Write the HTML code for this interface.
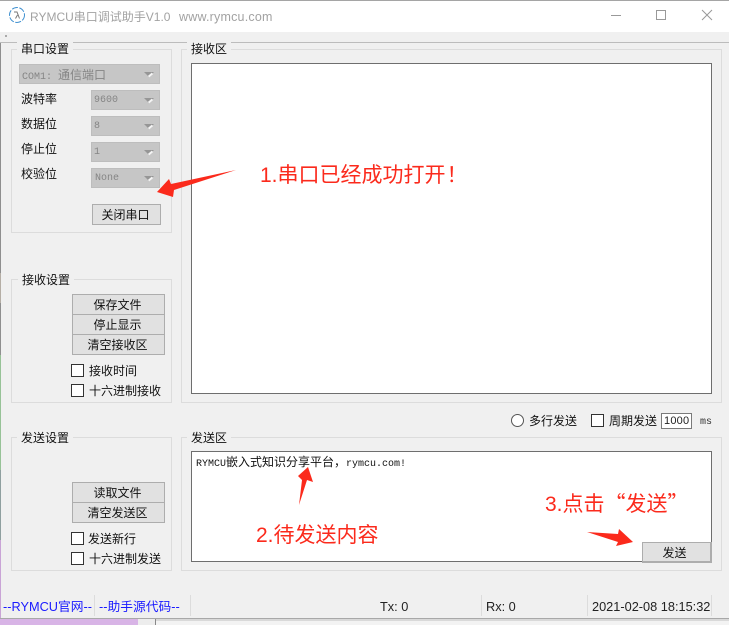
<!DOCTYPE html>
<html><head><meta charset="utf-8"><style>
html,body{margin:0;padding:0;width:729px;height:625px;overflow:hidden;background:#f3f3f3}
body{position:relative;font-family:"Liberation Sans","Noto Sans CJK SC",sans-serif;font-size:12px;color:#111}
div,span{position:absolute;box-sizing:border-box;white-space:nowrap}
.g{border:1px solid #dcdcdc}
.l{background:#f0f0f0;padding:0 4px;line-height:14px;height:14px;font-size:12px;color:#111}
.c{background:#c6c6c6;border:1px solid #bdbdbd;color:#858585;font:10px/20px "Liberation Mono","Noto Sans CJK SC",monospace;padding-left:2px}
.c i{font-style:normal;font-size:12px;font-family:"Noto Sans CJK SC",sans-serif}
.c:after{content:"";position:absolute;right:5px;top:7px;border:5px solid transparent;border-top:5px solid #969696;border-bottom:0}
.c:before{content:"";position:absolute;right:6px;top:9px;width:5px;height:2px;background:#f4f4f4;transform:rotate(-40deg);z-index:1}
.t{line-height:14px;height:14px}
.b{background:#e1e1e1;border:1px solid #adadad;text-align:center;line-height:21px;font-size:12px;color:#111;padding-right:2px}
.k{width:13px;height:13px;border:1px solid #333;background:#fff}
.r{color:#fb2a1c;font-size:21px;line-height:26px;height:26px}
.r i{font-style:normal;font-family:"Noto Sans CJK SC",sans-serif}
.s{width:1px;background:#dcdcdc;top:595px;height:21px}
.a{color:#1a1aff;line-height:14px;height:14px;font-size:12.75px}
.m{line-height:14px;height:14px;font-size:12.75px;color:#222;top:600px}
</style></head><body>
<div style="left:0;top:619px;width:138px;height:6px;background:#d8b4e6"></div>
<div style="left:138px;top:619px;width:17px;height:6px;background:#ededed"></div>
<div style="left:155px;top:619px;width:1px;height:6px;background:#888"></div>
<div style="left:0;top:0;width:729px;height:618px;background:#f0f0f0"></div>
<div style="left:0;top:618px;width:729px;height:1px;background:#a8a8a8"></div>
<div style="left:156px;top:619px;width:573px;height:2px;background:#d9d9d9"></div>
<div style="left:0;top:43px;width:1px;height:230px;background:#8f8f8f"></div>
<div style="left:0;top:273px;width:1px;height:30px;background:#b5aea5"></div>
<div style="left:0;top:303px;width:1px;height:52px;background:#8f8f8f"></div>
<div style="left:0;top:355px;width:1px;height:115px;background:#97c297"></div>
<div style="left:0;top:470px;width:1px;height:70px;background:#8f9f9f"></div>
<div style="left:0;top:540px;width:1px;height:78px;background:#c9a4d6"></div>
<div style="left:0;top:0;width:729px;height:32px;background:#fff;border-top:1px solid #a5a5a5"></div>
<div style="left:0;top:42px;width:729px;height:1px;background:#bcbcbc"></div>
<div style="left:5px;top:35px;width:2px;height:2px;background:#aaa"></div>

<svg style="position:absolute;left:8px;top:6px" width="18" height="18" viewBox="0 0 18 18" fill="none" stroke="#3f90d0" stroke-width="1"><circle cx="9" cy="9" r="7.5" stroke-dasharray="6 1.5"/><path d="M6 6h3l2.5 6.5M9.5 9l-2 3.5" stroke="#777"/></svg>
<div class="t" style="left:30px;top:10px;font-size:12px;line-height:14px;color:#a2a2a2">RYMCU串口调试助手V1.0</div>
<div class="t" style="left:179px;top:10px;font-size:12.5px;color:#a2a2a2;letter-spacing:.2px">www.rymcu.com</div>

<div style="left:611px;top:15px;width:10px;height:1px;background:#999"></div>
<div style="left:656px;top:10px;width:10px;height:10px;border:1px solid #999"></div>
<svg style="position:absolute;left:701px;top:9px" width="12" height="12" fill="none" stroke="#999"><path d="M1 1L11 11M11 1L1 11"/></svg>

<!-- serial group -->
<div class="g" style="left:11px;top:49px;width:161px;height:184px"></div>
<div class="l" style="left:17px;top:42px">串口设置</div>
<div class="c" style="left:19px;top:64px;width:141px;height:20px">COM1: <i>通信端口</i></div>
<div class="t" style="left:21px;top:92px">波特率</div>
<div class="c" style="left:91px;top:90px;width:69px;height:20px">9600</div>
<div class="t" style="left:21px;top:117px">数据位</div>
<div class="c" style="left:91px;top:116px;width:69px;height:20px">8</div>
<div class="t" style="left:21px;top:142px">停止位</div>
<div class="c" style="left:91px;top:142px;width:69px;height:20px">1</div>
<div class="t" style="left:21px;top:167px">校验位</div>
<div class="c" style="left:91px;top:168px;width:69px;height:20px;padding-left:3px">None</div>
<div class="b" style="left:92px;top:204px;width:69px;height:21px">关闭串口</div>

<!-- receive group -->
<div class="g" style="left:11px;top:279px;width:161px;height:124px"></div>
<div class="l" style="left:18px;top:273px">接收设置</div>
<div class="b" style="left:72px;top:294px;width:93px;height:21px">保存文件</div>
<div class="b" style="left:72px;top:314px;width:93px;height:21px">停止显示</div>
<div class="b" style="left:72px;top:334px;width:93px;height:21px">清空接收区</div>
<div class="k" style="left:71px;top:364px"></div>
<div class="t" style="left:89px;top:364px">接收时间</div>
<div class="k" style="left:71px;top:384px"></div>
<div class="t" style="left:89px;top:384px">十六进制接收</div>

<!-- send settings -->
<div class="g" style="left:11px;top:437px;width:161px;height:134px"></div>
<div class="l" style="left:17px;top:431px">发送设置</div>
<div class="b" style="left:72px;top:482px;width:93px;height:21px">读取文件</div>
<div class="b" style="left:72px;top:502px;width:93px;height:21px">清空发送区</div>
<div class="k" style="left:71px;top:532px"></div>
<div class="t" style="left:88px;top:532px">发送新行</div>
<div class="k" style="left:71px;top:552px"></div>
<div class="t" style="left:89px;top:552px">十六进制发送</div>

<!-- receive area -->
<div class="g" style="left:181px;top:49px;width:541px;height:354px"></div>
<div class="l" style="left:187px;top:42px">接收区</div>
<div style="left:191px;top:63px;width:521px;height:331px;background:#fff;border:1px solid #6e6e6e"></div>

<!-- options -->
<div style="left:511px;top:414px;width:13px;height:13px;border:1px solid #555;border-radius:50%;background:#fff"></div>
<div class="t" style="left:529px;top:414px">多行发送</div>
<div class="k" style="left:591px;top:414px"></div>
<div class="t" style="left:609px;top:414px">周期发送</div>
<div style="left:661px;top:413px;width:31px;height:16px;border:1px solid #7a7a7a;background:#fff;font:11px/14px 'Liberation Sans';padding-left:2px;color:#222;letter-spacing:.2px">1000</div>
<div class="t" style="left:700px;top:416px;font:10px/14px 'Liberation Mono';color:#333">ms</div>

<!-- send area -->
<div class="g" style="left:181px;top:437px;width:541px;height:134px"></div>
<div class="l" style="left:187px;top:431px">发送区</div>
<div style="left:191px;top:451px;width:521px;height:111px;background:#fff;border:1px solid #6e6e6e"></div>
<div class="t" style="left:196px;top:455px;font:10px/14px 'Liberation Mono','Noto Sans CJK SC',monospace;color:#111">RYMCU<span style="position:static;font-size:12px;font-family:'Noto Sans CJK SC'">嵌入式知识分享平台，</span>rymcu.com!</div>
<div class="b" style="left:642px;top:542px;width:70px;height:21px;border-width:1px 2px 2px 1px;padding-right:4px;line-height:21px">发送</div>

<!-- annotations -->
<div class="r" style="left:260px;top:161px">1.串口已经成功打开<i style="margin-left:1px">！</i></div>
<div class="r" style="left:256px;top:523px">2.待发送内容</div>
<div class="r" style="left:545px;top:490px">3.点击<i>“发送”</i></div>
<svg style="position:absolute;left:0;top:0" width="729" height="625"><g fill="#fb2a1c">
<polygon points="236,170 171,184 169,179 157,192 173,197 174,190"/>
<polygon points="308,467 298,476 302,480 299,505 307,480 313,482"/>
<polygon points="587,532 618,534 619,529 633,542 616,546 618,542"/>
</g></svg>

<!-- status -->
<div class="a" style="left:3px;top:600px">--RYMCU官网--</div>
<div class="s" style="left:94px"></div>
<div class="a" style="left:99px;top:600px">--助手源代码--</div>
<div class="s" style="left:190px"></div>
<div class="m" style="left:380px">Tx: 0</div>
<div class="s" style="left:481px"></div>
<div class="m" style="left:486px">Rx: 0</div>
<div class="s" style="left:587px"></div>
<div class="m" style="left:592px">2021-02-08 18:15:32</div>
<div class="s" style="left:711px"></div>
</body></html>
